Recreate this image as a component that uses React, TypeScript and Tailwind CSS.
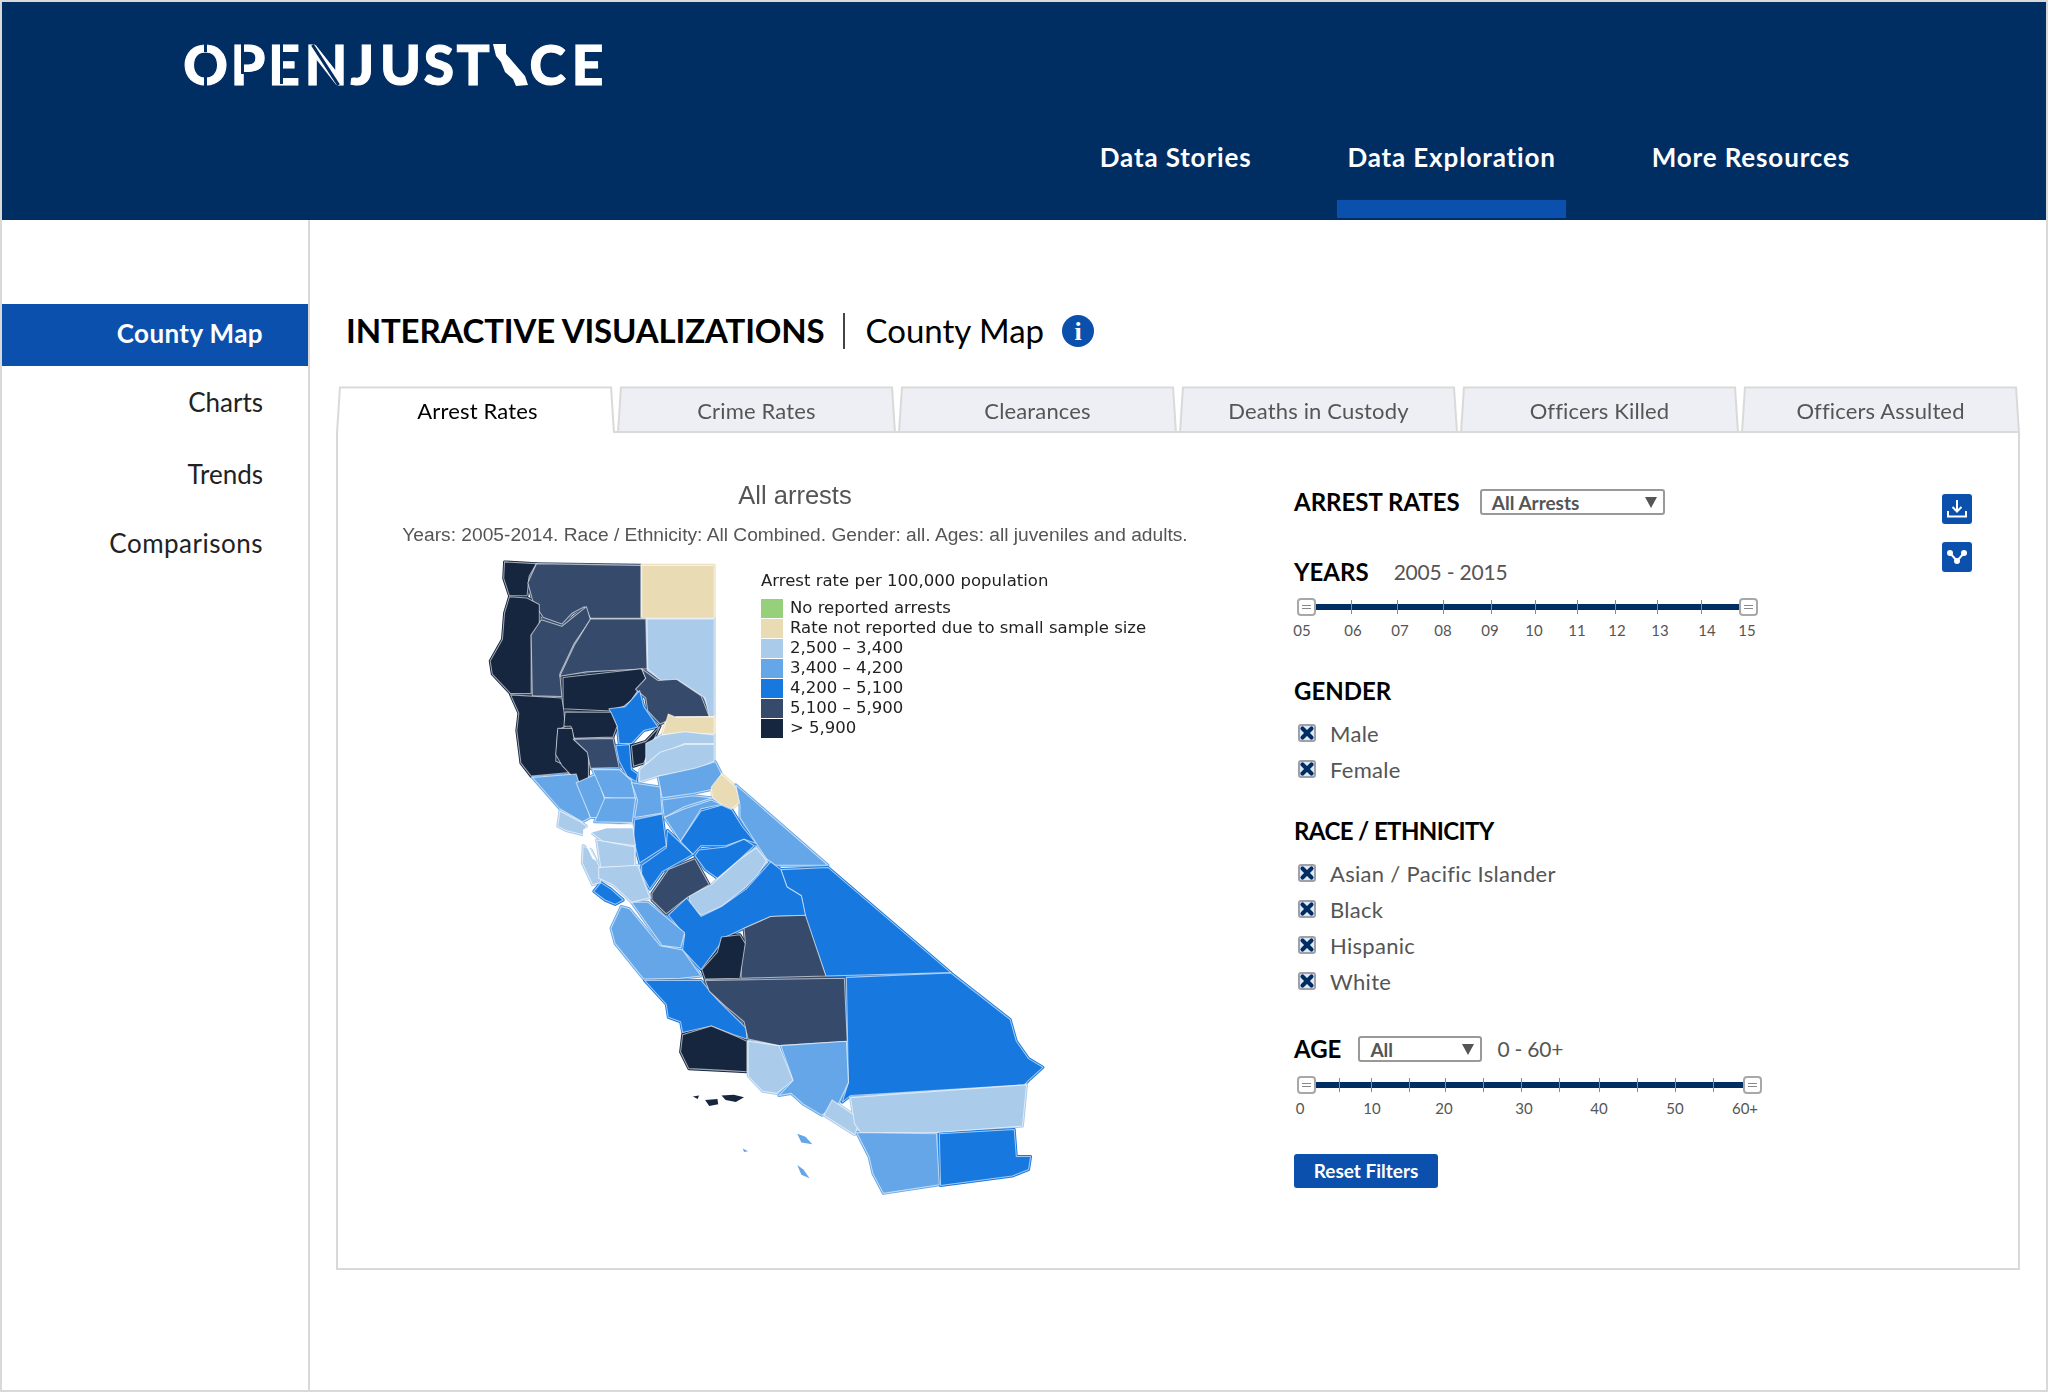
import type { ReactNode } from 'react';
import { X } from 'lucide-react';

const DARK = '#16263f';
const NAVY = '#364b6b';
const BLUE = '#1778e0';
const MID = '#64a6e8';
const LIGHT = '#abcbeb';
const TAN = '#e9dcb5';
const GREEN = '#96d07a';

// county shapes, traced from the map by eye
const counties: [string, string][] = [
  [DARK, '160,52 238,56 220,85 215,130 172,130 158,90'],
  [NAVY, '238,56 493,60 493,182 370,182 355,155 325,170 300,195 255,180 230,145 217,100'],
  [TAN, '495,60 672,60 672,182 495,182'],
  [DARK, '172,132 215,135 245,150 245,210 225,220 225,355 175,355 130,310 125,280 155,230 160,170'],
  [NAVY, '225,220 250,185 300,200 360,155 370,185 330,240 295,310 300,362 228,360'],
  [NAVY, '370,183 505,183 508,298 360,305 295,315 330,245'],
  [LIGHT, '508,183 672,183 672,408 660,408 650,365 580,322 545,328 510,298'],
  [DARK, '303,318 495,298 505,320 470,370 450,385 420,395 303,390'],
  [NAVY, '495,298 535,325 580,322 640,360 660,408 580,408 540,425 510,395 505,365 480,345 505,320'],
  [BLUE, '490,348 500,385 535,432 500,440 470,470 440,470 435,430 415,390 455,385'],
  [DARK, '175,358 300,365 305,395 308,430 290,440 285,510 340,535 225,545 200,515 190,440 195,400'],
  [DARK, '308,397 420,398 435,430 425,455 330,458 322,430 305,430'],
  [DARK, '290,435 325,435 330,460 365,490 365,550 345,565 300,520 285,495'],
  [NAVY, '328,460 425,458 440,525 370,527 362,490'],
  [BLUE, '432,475 465,472 470,530 485,540 482,558 460,545 440,510'],
  [DARK, '470,475 505,465 540,430 520,470 500,515 475,522'],
  [TAN, '545,450 560,402 580,410 672,408 672,448 600,445'],
  [LIGHT, '505,470 545,450 600,443 672,450 672,470 600,470 540,495 505,518'],
  [LIGHT, '490,558 490,530 540,490 600,472 672,472 672,510 625,530 535,545'],
  [MID, '535,545 625,527 675,512 690,540 668,575 620,585 545,595'],
  [TAN, '690,540 725,570 735,605 715,620 690,610 668,595 665,570'],
  [MID, '545,600 620,590 668,595 600,615 550,640'],
  [MID, '550,640 600,620 665,600 690,610 640,620 590,695 558,650'],
  [MID, '725,565 950,750 820,750 800,735 775,700 735,640 735,610'],
  [BLUE, '640,625 690,612 715,622 740,660 775,700 745,690 700,705 640,705 620,725 590,695'],
  [BLUE, '635,715 700,708 745,690 770,705 730,740 680,780 650,760 625,728'],
  [LIGHT, '610,820 665,795 730,740 775,710 800,740 780,770 750,800 690,845 640,865 615,845'],
  [BLUE, '835,760 950,755 1250,997 945,1005 895,870 885,820 850,800'],
  [BLUE, '810,742 835,760 850,800 885,820 895,865 810,868 745,895 700,915 680,940 640,990 595,945 600,910 560,865 605,825 640,868 690,845 750,805'],
  [NAVY, '745,895 810,868 895,865 945,1005 738,1010 738,965 748,925'],
  [DARK, '690,915 735,910 748,930 735,1010 650,1012 642,990 680,950'],
  [MID, '445,845 465,850 540,935 595,945 640,1005 590,1010 500,1012 430,930 420,895'],
  [MID, '470,835 510,835 600,905 590,940 545,935'],
  [NAVY, '520,815 560,760 625,735 660,795 605,825 555,862 520,830'],
  [BLUE, '495,750 555,710 558,670 620,725 545,765 515,805 495,770'],
  [BLUE, '478,645 545,632 555,705 490,745 475,690'],
  [MID, '228,548 335,540 370,640 350,650 295,620'],
  [MID, '335,560 385,540 405,600 390,640 370,640'],
  [MID, '375,530 440,530 470,555 480,600 405,595'],
  [MID, '405,595 480,595 472,652 380,650'],
  [MID, '470,560 540,570 545,630 478,640 485,600'],
  [LIGHT, '295,625 345,650 360,660 352,680 310,670 290,660'],
  [LIGHT, '368,672 410,662 472,655 480,705 400,695'],
  [LIGHT, '385,692 478,708 478,752 395,755'],
  [LIGHT, '352,705 372,715 395,760 395,790 375,795 350,745'],
  [LIGHT, '390,755 485,750 515,825 470,835 425,795 390,780'],
  [BLUE, '378,810 395,790 420,805 450,830 430,840 405,830'],
  [BLUE, '502,1015 640,1015 680,1060 750,1125 752,1150 720,1140 665,1120 595,1135 590,1110 560,1100 555,1070'],
  [NAVY, '650,1015 990,1010 997,1155 830,1165 755,1150 745,1110 700,1075 660,1040'],
  [BLUE, '995,1008 1250,998 1395,1105 1410,1155 1440,1195 1475,1215 1440,1245 1430,1255 1100,1275 1005,1280 985,1295 1000,1250'],
  [DARK, '595,1140 665,1120 730,1145 752,1155 752,1225 695,1222 610,1218 590,1180'],
  [LIGHT, '755,1155 830,1165 865,1245 825,1275 790,1270 755,1235'],
  [MID, '835,1165 995,1155 1000,1250 975,1300 935,1325 890,1300 860,1275 830,1280 865,1245'],
  [LIGHT, '960,1290 1030,1335 1015,1370 940,1325'],
  [LIGHT, '1005,1285 1100,1278 1435,1255 1425,1350 1215,1365 1030,1365 1015,1345'],
  [MID, '1020,1365 1215,1368 1222,1485 1085,1505 1060,1460 1050,1420'],
  [BLUE, '1222,1368 1405,1358 1410,1420 1445,1420 1440,1450 1400,1465 1225,1487'],
];

const islands: [string, string][] = [
  [DARK, '620,1282 635,1280 632,1288'],
  [DARK, '650,1290 680,1288 682,1300 660,1304'],
  [DARK, '690,1280 720,1278 745,1284 725,1295 700,1290'],
  [MID, '875,1368 895,1375 912,1392 885,1388'],
  [MID, '742,1402 755,1408 745,1410'],
  [MID, '875,1440 890,1450 905,1470 885,1462'],
];

const legend = [
  [GREEN, 'No reported arrests'],
  [TAN, 'Rate not reported due to small sample size'],
  [LIGHT, '2,500 – 3,400'],
  [MID, '3,400 – 4,200'],
  [BLUE, '4,200 – 5,100'],
  [NAVY, '5,100 – 5,900'],
  [DARK, '> 5,900'],
];

const tabs = ['Arrest Rates', 'Crime Rates', 'Clearances', 'Deaths in Custody', 'Officers Killed', 'Officers Assulted'];

const yearTicks = [54, 100, 146, 194, 238, 280, 318, 360, 404];
const yearLabels: [string, number][] = [['05', 5], ['06', 56], ['07', 103], ['08', 146], ['09', 193], ['10', 237], ['11', 280], ['12', 320], ['13', 363], ['14', 410], ['15', 450]];
const ageTicks = [42, 74, 112, 148, 186, 224, 262, 302, 340, 378, 416];
const ageLabels: [string, number][] = [['0', 3], ['10', 75], ['20', 147], ['30', 227], ['40', 302], ['50', 378], ['60+', 448]];

function Handle() {
  return (
    <div className="z-10 flex h-[18px] w-[19px] shrink-0 flex-col items-center justify-center gap-[2px] rounded-[4px] border-2 border-[#a8a8a8] bg-white">
      <div className="h-px w-[9px] bg-[#888]" />
      <div className="h-px w-[9px] bg-[#888]" />
    </div>
  );
}

function Slider({ width, ticks, labels }: { width: number; ticks: number[]; labels: [string, number][] }) {
  return (
    <div style={{ width }}>
      <div className="relative flex h-[18px] items-center justify-between">
        <div className="absolute inset-x-0 h-[6px] bg-[#002d62]" />
        <Handle />
        {ticks.map((t) => (
          <div key={t} className="absolute top-[2px] h-[14px] w-px bg-[#8a8a8a]" style={{ left: t }} />
        ))}
        <Handle />
      </div>
      <div className="relative mt-[5px] h-[18px]">
        {labels.map(([text, x]) => (
          <span key={text} className="absolute -translate-x-1/2 text-[15px] leading-[18px] text-[#555]" style={{ left: x }}>
            {text}
          </span>
        ))}
      </div>
    </div>
  );
}

function Check({ label }: { label: string }) {
  return (
    <div className="flex h-[36px] items-center pl-[4px]">
      <div className="flex h-[18px] w-[18px] items-center justify-center rounded-[3px] border-2 border-[#a0a0a8] bg-[#dfe8f5]">
        <X size={18} strokeWidth={5.5} className="shrink-0 text-[#002d62]" />
      </div>
      <span className="ml-[14px] text-[22px] tracking-[0.3px] text-[#555]">{label}</span>
    </div>
  );
}

function Dropdown({ label, width }: { label: string; width: string }) {
  return (
    <div className={`flex h-[26px] items-center justify-between rounded-[3px] border-2 border-[#999] pl-[10px] pr-[6px] ${width}`}>
      <span className="text-[19px] leading-none font-bold text-[#555]">{label}</span>
      <div className="h-0 w-0 border-x-[6px] border-t-[11px] border-x-transparent border-t-[#555]" />
    </div>
  );
}

function Heading({ children, className = '' }: { children: string; className?: string }) {
  return <h3 className={`text-[24px] leading-none font-bold text-black ${className}`}>{children}</h3>;
}

// one logo letter in a box of its own, the stencil cuts lie over it
function Letter({ children, className, cuts }: { children: ReactNode; className: string; cuts?: ReactNode }) {
  return (
    <span className={`relative flex justify-center ${className}`}>
      {children}
      {cuts}
    </span>
  );
}

function Logo() {
  return (
    <div className="flex items-center pl-[181px] pt-[34px] text-[55px] leading-[56px] font-black text-white [-webkit-text-stroke:1px_white]">
      <Letter
        className="w-[45px]"
        cuts={
          <>
            <i className="absolute left-[21px] top-[6px] h-[10px] w-[3px] bg-[#002d62]" />
            <i className="absolute left-[21px] bottom-[6px] h-[10px] w-[3px] bg-[#002d62]" />
          </>
        }
      >
        O
      </Letter>
      <Letter className="ml-[5px] w-[30px]" cuts={<i className="absolute left-[8px] top-[8px] h-[30px] w-[3px] bg-[#002d62]" />}>
        P
      </Letter>
      <Letter className="ml-[7px] w-[28px]" cuts={<i className="absolute left-[10px] top-[8px] h-[40px] w-[3px] bg-[#002d62]" />}>
        E
      </Letter>
      <Letter className="ml-[9px] w-[38px]" cuts={<i className="absolute left-[17px] top-[5px] h-[48px] w-[3px] -rotate-[33deg] bg-[#002d62]" />}>
        N
      </Letter>
      <Letter className="ml-[5px] w-[25px]">J</Letter>
      <Letter className="ml-[8px] w-[35px]">U</Letter>
      <Letter className="ml-[5px] w-[32px]">S</Letter>
      <Letter className="ml-[1px] w-[34px]">T</Letter>
      <svg width="36" height="43" viewBox="0 0 36 43" className="ml-[3px] mt-[3px]">
        <path d="M0 0 L13 0 L13 10 L32 32 L35 41 L23 42 L20 35 L12 28 L8 18 L3 12 Z" fill="#fff" stroke="none" />
      </svg>
      <Letter className="w-[37px]">C</Letter>
      <Letter className="ml-[8px] w-[27px]">E</Letter>
    </div>
  );
}

export default function App() {
  return (
    <div className="flex h-[1392px] w-[2048px] flex-col border-2 border-[#d9d9d9] bg-white font-['Lato',sans-serif]">
      {/* header */}
      <header className="flex h-[218px] flex-col justify-between bg-[#002d62]">
        <Logo />
        <nav className="mb-[2px] flex justify-end gap-[76px] pr-[186px] text-[26px] font-bold tracking-[0.85px] text-white">
          <a className="flex h-[84px] items-start px-[10px] pt-[4px]">Data Stories</a>
          <a className="flex h-[84px] items-start border-b-[18px] border-[#0b50ac] px-[10px] pt-[4px]">Data Exploration</a>
          <a className="flex h-[84px] items-start px-[10px] pt-[4px]">More Resources</a>
        </nav>
      </header>

      <div className="flex flex-1">
        {/* sidebar */}
        <aside className="w-[308px] shrink-0 border-r-2 border-[#d9d9d9] pt-[84px] text-right text-[26px] text-[#222]">
          <div className="flex h-[62px] items-center justify-end bg-[#0b50ac] pb-[3px] pr-[45px] font-bold tracking-[0.4px] text-white">County Map</div>
          <div className="flex h-[72px] items-center justify-end pr-[45px]">Charts</div>
          <div className="flex h-[72px] items-center justify-end pr-[45px]">Trends</div>
          <div className="flex h-[66px] items-center justify-end pr-[45px] tracking-[0.5px]">Comparisons</div>
        </aside>

        {/* main */}
        <main className="flex-1 pl-[26px] pr-[26px]">
          <div className="mt-[88px] flex h-[46px] items-center pl-[10px] text-black">
            <h1 className="text-[33px] font-bold tracking-[-0.15px]">INTERACTIVE VISUALIZATIONS</h1>
            <div className="ml-[18px] mr-[21px] h-[36px] w-[2px] bg-[#444]" />
            <span className="text-[33px]">County Map</span>
            <div className="ml-[18px] flex h-[32px] w-[32px] items-center justify-center rounded-full bg-[#0b50ac] font-['Liberation_Serif',serif] text-[26px] font-bold text-white">
              i
            </div>
          </div>

          {/* tabs */}
          <div className="mt-[32px] flex gap-[2px]">
            {tabs.map((tab, i) => (
              <div key={tab} className="relative z-10 flex h-[47px] flex-1 items-center justify-center">
                <div
                  className={`absolute inset-x-0 -top-[1px] bottom-0 origin-bottom [transform:perspective(300px)_rotateX(8deg)] border-2 border-[#d9d9d9] ${
                    i === 0 ? 'border-b-0 bg-white' : 'bg-[#eeeff4]'
                  }`}
                />
                <span className={`relative pt-[2px] text-[22px] tracking-[0.15px] ${i === 0 ? 'pl-[4px] text-black' : 'text-[#555]'}`}>{tab}</span>
              </div>
            ))}
          </div>

          {/* panel */}
          <div className="-mt-[2px] flex h-[839px] border-2 border-[#d9d9d9]">
            {/* map column */}
            <div className="w-[956px] shrink-0 pt-[47px]">
              <div className="flex w-[914px] flex-col items-center font-['Liberation_Sans',sans-serif] text-[#555] blur-[0.4px]">
                <div className="text-[25.5px] leading-[30px]">All arrests</div>
                <div className="mt-[13px] text-[19.2px] leading-[24px] whitespace-nowrap">
                  Years: 2005-2014. Race / Ethnicity: All Combined. Gender: all. Ages: all juveniles and adults.
                </div>
              </div>
              <div className="relative ml-[101px] mt-[11px] h-[661px] w-[642px]">
                <svg viewBox="0 43 1568 1521" preserveAspectRatio="none" className="h-[661px] w-[642px] blur-[0.5px]">
                  {/* fat same-colour strokes first, so no white shows between neighbours */}
                  {counties.map(([fill, points]) => (
                    <polygon key={points} points={points} fill={fill} stroke={fill} strokeWidth="7" strokeLinejoin="round" />
                  ))}
                  {counties.map(([fill, points]) => (
                    <polygon key={points} points={points} fill={fill} stroke="#fff" strokeOpacity="0.6" strokeWidth="2.5" strokeLinejoin="round" />
                  ))}
                  {islands.map(([fill, points]) => (
                    <polygon key={points} points={points} fill={fill} />
                  ))}
                  {/* the bay */}
                  <polygon points="352,668 385,655 470,656 475,665 410,665 372,675 368,712 385,740 375,735 352,690" fill="#fff" />
                </svg>
                <div className="absolute left-[322px] top-[13px] font-['DejaVu_Sans',sans-serif] text-[#222] blur-[0.3px]">
                  <div className="h-[27px] text-[16.5px] leading-[20px] whitespace-nowrap">Arrest rate per 100,000 population</div>
                  {legend.map(([color, label]) => (
                    <div key={label} className="flex h-[20px] items-center text-[16.5px] whitespace-nowrap">
                      <div className="h-[19px] w-[22px]" style={{ background: color }} />
                      <span className="ml-[7px]">{label}</span>
                    </div>
                  ))}
                </div>
              </div>
            </div>

            {/* filters */}
            <div className="flex flex-1 pt-[56px]">
              <div className="w-[648px] shrink-0">
                <div className="flex h-[26px] items-center">
                  <Heading>ARREST RATES</Heading>
                  <div className="ml-[20px]">
                    <Dropdown label="All Arrests" width="w-[185px]" />
                  </div>
                </div>
                <div className="mt-[43px] flex h-[28px] items-center">
                  <Heading>YEARS</Heading>
                  <span className="ml-[25px] text-[21px] tracking-[-0.2px] text-[#555]">2005 - 2015</span>
                </div>
                <div className="mt-[12px] ml-[3px]">
                  <Slider width={461} ticks={yearTicks} labels={yearLabels} />
                </div>
                <div className="mt-[37px] flex h-[30px] items-center">
                  <Heading>GENDER</Heading>
                </div>
                <div className="mt-[9px]">
                  <Check label="Male" />
                  <Check label="Female" />
                </div>
                <div className="mt-[29px] flex h-[30px] items-center">
                  <Heading className="tracking-[-0.6px]">RACE / ETHNICITY</Heading>
                </div>
                <div className="mt-[9px]">
                  <Check label="Asian / Pacific Islander" />
                  <Check label="Black" />
                  <Check label="Hispanic" />
                  <Check label="White" />
                </div>
                <div className="mt-[38px] flex h-[24px] items-center">
                  <Heading>AGE</Heading>
                  <div className="ml-[17px]">
                    <Dropdown label="All" width="w-[124px]" />
                  </div>
                  <span className="ml-[15px] text-[21px] tracking-[-0.2px] text-[#555]">0 - 60+</span>
                </div>
                <div className="mt-[15px] ml-[3px]">
                  <Slider width={465} ticks={ageTicks} labels={ageLabels} />
                </div>
                <button className="mt-[37px] h-[34px] w-[144px] rounded-[3px] bg-[#0b50ac] text-[19px] font-bold text-white">Reset Filters</button>
              </div>
              <div className="flex flex-col gap-[18px] pt-[5px]">
                <div className="flex h-[30px] w-[30px] items-center justify-center rounded-[3px] bg-[#0b50ac]">
                  <svg width="20" height="20" viewBox="0 0 20 20" fill="none" stroke="#fff" strokeWidth="2">
                    <path d="M10 1 V12 M5.5 8 L10 12.5 L14.5 8 M1 12 V17.5 H19 V12" />
                  </svg>
                </div>
                <div className="flex h-[30px] w-[30px] items-center justify-center rounded-[3px] bg-[#0b50ac]">
                  <svg width="22" height="18" viewBox="0 0 22 18" fill="#fff" stroke="#fff" strokeWidth="2">
                    <path d="M4 5 L11 13 L18 5" fill="none" />
                    <circle cx="4" cy="5" r="2" />
                    <circle cx="18" cy="5" r="2" />
                    <circle cx="11" cy="13" r="2" />
                  </svg>
                </div>
              </div>
            </div>
          </div>
        </main>
      </div>
    </div>
  );
}
